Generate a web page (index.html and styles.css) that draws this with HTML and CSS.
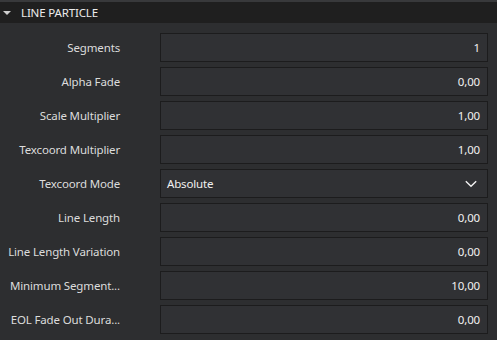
FILE: index.html
```html
<!DOCTYPE html>
<html lang="en">
<head>
    <meta charset="UTF-8">
    <meta name="viewport" content="width=device-width, initial-scale=1.0">
    <link rel="stylesheet" href="styles.css">
    <title>Line Particle</title>
</head>
<body>
    <div class="panel">
        <div class="section-head">
            <span class="caret"></span>
            <span class="section-title">LINE PARTICLE</span>
        </div>
        <div class="props">
            <div class="row">
                <span class="label">Segments</span>
                <div class="field num">1</div>
            </div>
            <div class="row">
                <span class="label">Alpha Fade</span>
                <div class="field num">0,00</div>
            </div>
            <div class="row">
                <span class="label">Scale Multiplier</span>
                <div class="field num">1,00</div>
            </div>
            <div class="row">
                <span class="label">Texcoord Multiplier</span>
                <div class="field num">1,00</div>
            </div>
            <div class="row">
                <span class="label">Texcoord Mode</span>
                <div class="field combo">
                    <span>Absolute</span>
                    <svg width="12" height="8" viewBox="0 0 12 8"><path d="M0.8 1.2 L6 6.2 L11.2 1.2" fill="none" stroke="#f2f2f2" stroke-width="1.4"/></svg>
                </div>
            </div>
            <div class="row">
                <span class="label">Line Length</span>
                <div class="field num">0,00</div>
            </div>
            <div class="row">
                <span class="label">Line Length Variation</span>
                <div class="field num">0,00</div>
            </div>
            <div class="row">
                <span class="label" title="Minimum Segment Length">Minimum Segment...</span>
                <div class="field num">10,00</div>
            </div>
            <div class="row">
                <span class="label" title="EOL Fade Out Duration">EOL Fade Out Dura...</span>
                <div class="field num">0,00</div>
            </div>
        </div>
    </div>
</body>
</html>
```

FILE: styles.css
```css
body {
    margin: 0;
    background-color: #2d2e30;
    color: #e6e6e6;
    font-family: "Noto Sans", "Open Sans", sans-serif;
    font-size: 11.5px;
    letter-spacing: -0.15px;
}

.panel {
    border-top: 2px solid #38393b;
}

.section-head {
    display: flex;
    align-items: center;
    height: 21px;
    background-color: #1f1f1f;
}

.caret {
    width: 0;
    height: 0;
    margin-left: 3px;
    margin-right: 10px;
    border-left: 4px solid transparent;
    border-right: 4px solid transparent;
    border-top: 4px solid #cfcfcf;
}

.section-title {
    color: #ececec;
}

.props {
    display: flex;
    flex-direction: column;
    gap: 5px;
    padding: 10px 9px 0 6px;
}

.row {
    display: flex;
    align-items: center;
    height: 29px;
}

.label {
    width: 114px;
    margin-right: 40px;
    text-align: right;
    white-space: nowrap;
    color: #dcdcdc;
}

.field {
    flex: 1;
    height: 27px;
    display: flex;
    align-items: center;
    background-color: #303134;
    border: 1px solid #1c1c1d;
    color: #f0f0f0;
}

.num {
    justify-content: flex-end;
    padding-right: 7px;
}

.combo {
    justify-content: space-between;
    padding-left: 6px;
    padding-right: 10px;
}
```
